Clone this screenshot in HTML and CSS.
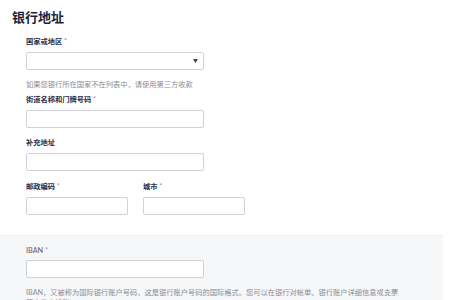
FILE: index.html
```html
<!DOCTYPE html>
<html lang="zh-CN">
<head>
    <meta charset="UTF-8">
    <meta name="viewport" content="width=device-width, initial-scale=1.0">
    <title>银行地址</title>
    <link rel="stylesheet" href="styles.css">
</head>
<body>
    <h1 class="title">银行地址</h1>

    <div class="form">
        <div class="field first">
            <div class="label">国家或地区 <span class="req">*</span></div>
            <div class="select">
                <svg width="5" height="4" viewBox="0 0 5 4"><path d="M0 0 L5 0 L2.5 4 Z" fill="#444"/></svg>
            </div>
            <div class="hint">如果您银行所在国家不在列表中，请使用第三方收款</div>
        </div>

        <div class="field after-hint">
            <div class="label">街道名称和门牌号码 <span class="req">*</span></div>
            <div class="input"></div>
        </div>

        <div class="field">
            <div class="label">补充地址</div>
            <div class="input"></div>
        </div>

        <div class="row">
            <div class="field half">
                <div class="label">邮政编码 <span class="req">*</span></div>
                <div class="input"></div>
            </div>
            <div class="field half">
                <div class="label">城市 <span class="req">*</span></div>
                <div class="input"></div>
            </div>
        </div>
    </div>

    <div class="iban-section">
        <div class="label light">IBAN <span class="req">*</span></div>
        <div class="input"></div>
        <div class="desc">IBAN，又被称为国际银行账户号码，这是银行账户号码的国际格式。您可以在银行对帐单、银行账户详细信息或支票等文件中找到</div>
    </div>
</body>
</html>
```

FILE: styles.css
```css
body {
    margin: 0;
    background-color: #ffffff;
    font-family: Lato, "Noto Sans CJK SC", sans-serif;
    overflow: hidden;
}

.title {
    margin: 0;
    padding: 9px 0 0 12px;
    font-size: 13px;
    line-height: 16px;
    font-weight: 700;
    color: #1c1f3c;
}

.form {
    padding-left: 26px;
}

.field {
    margin-top: 10px;
}

.field.first {
    margin-top: 12px;
}

.field.after-hint {
    margin-top: 5px;
}

.label {
    font-size: 7.25px;
    line-height: 10px;
    font-weight: 700;
    color: #2b2e45;
    margin-bottom: 5px;
}

.label.light {
    font-weight: 400;
    color: #555a6e;
    margin-bottom: 4px;
}

.req {
    color: #c98080;
    font-weight: 400;
}

.select,
.input {
    box-sizing: border-box;
    width: 178px;
    height: 18px;
    border: 1px solid #cfd2d8;
    border-radius: 2px;
    background-color: #ffffff;
}

.select {
    display: flex;
    justify-content: flex-end;
    align-items: center;
    padding-right: 5px;
}

.hint {
    margin-top: 10px;
    font-size: 7.25px;
    line-height: 10px;
    color: #8a8d96;
}

.row {
    display: flex;
    gap: 15px;
    margin-top: 1px;
}

.half .input {
    width: 102px;
}

.iban-section {
    margin-top: 20px;
    width: 443px;
    box-sizing: border-box;
    padding: 10px 0 10px 26px;
    background-color: #f6f7f9;
    border-top: 1px solid #f0f1f3;
}

.desc {
    margin-top: 10px;
    width: 378px;
    font-size: 7.25px;
    line-height: 10px;
    color: #8a8d96;
}
```
